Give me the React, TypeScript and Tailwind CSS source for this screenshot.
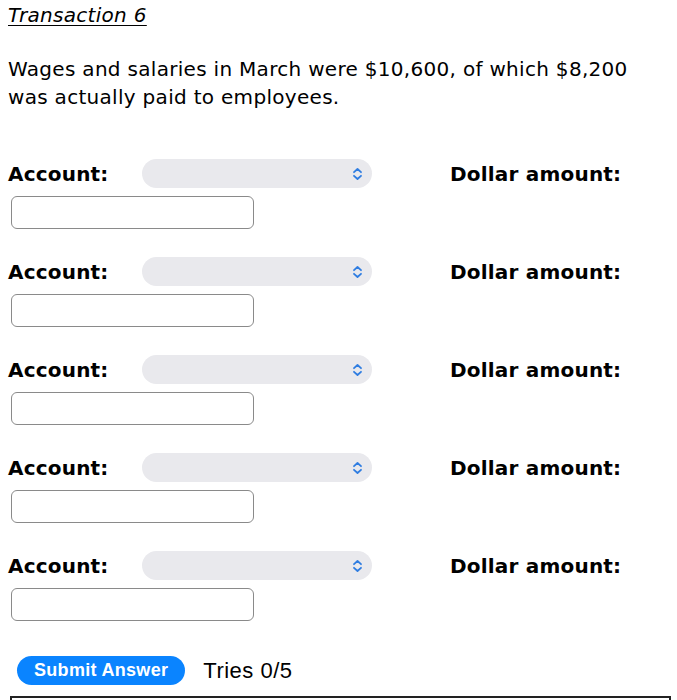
function Chevrons() {
  return (
    <svg width="11" height="14" viewBox="0 0 11 14" fill="none" className="shrink-0">
      <path d="M2 5.2 L5.5 2 L9 5.2" stroke="#2f7de1" strokeWidth="1.8" strokeLinecap="round" strokeLinejoin="round" />
      <path d="M2 8.8 L5.5 12 L9 8.8" stroke="#2f7de1" strokeWidth="1.8" strokeLinecap="round" strokeLinejoin="round" />
    </svg>
  );
}

function AccountRow() {
  return (
    <div className="mb-[28px]">
      <div className="flex h-[29px] items-center">
        <span className="w-[142px] pl-2 text-[20px] font-bold tracking-[0.2px] text-black">Account:</span>
        <div className="flex h-[29px] w-[230px] items-center justify-end rounded-full bg-[#e9e9ed] pr-[9px]">
          <Chevrons />
        </div>
        <span className="ml-[78px] text-[20px] font-bold tracking-[0.2px] text-black">Dollar amount:</span>
      </div>
      <div className="ml-[11px] mt-[8px] h-[33px] w-[243px] rounded-[6px] border border-[#8a8a8a] bg-white" />
    </div>
  );
}

export default function App() {
  return (
    <div className="h-[700px] w-[677px] overflow-hidden bg-white font-['DejaVu_Sans',Verdana,sans-serif] text-black">
      <h2 className="pl-2 pt-[3px] text-[20px] italic leading-[24px] tracking-[0.3px] underline decoration-1 underline-offset-[3px]">
        Transaction 6
      </h2>
      <p className="mt-[28px] w-[650px] pl-2 text-[20px] leading-[28px] tracking-[0.3px]">
        Wages and salaries in March were $10,600, of which $8,200 was actually paid to employees.
      </p>
      <div className="mt-[48px]">
        <AccountRow />
        <AccountRow />
        <AccountRow />
        <AccountRow />
        <AccountRow />
      </div>
      <div className="flex items-center pl-[17px] pt-[5px]">
        <button className="h-[29px] rounded-full bg-[#0a84ff] px-[17px] font-['Liberation_Sans',Arial,sans-serif] text-[18px] font-bold tracking-[0.3px] text-white">
          Submit Answer
        </button>
        <span className="ml-[18px] font-['Liberation_Sans',Arial,sans-serif] text-[22px] tracking-[0.5px]">Tries 0/5</span>
      </div>
      <div className="ml-[10px] mt-[9px] h-[40px] w-[661px] border-2 border-[#222]" />
    </div>
  );
}
